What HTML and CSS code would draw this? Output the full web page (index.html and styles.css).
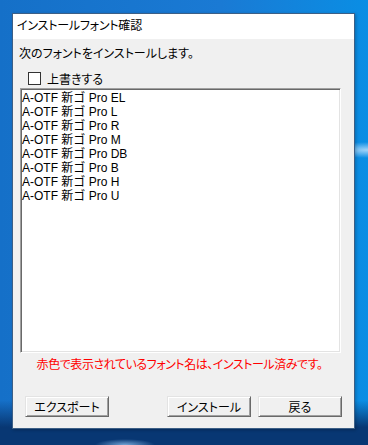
FILE: index.html
```html
<!DOCTYPE html>
<html lang="ja">
<head>
    <meta charset="UTF-8">
    <title>インストールフォント確認</title>
    <link rel="stylesheet" href="styles.css">
</head>
<body>
    <div class="dialog">
        <div class="titlebar">インストールフォント確認</div>
        <div class="content">
            <div class="prompt">次のフォントをインストールします。</div>
            <label class="overwrite"><span class="check"></span>上書きする</label>
            <div class="listbox">
                <div class="item">A-OTF 新ゴ Pro EL</div>
                <div class="item">A-OTF 新ゴ Pro L</div>
                <div class="item">A-OTF 新ゴ Pro R</div>
                <div class="item">A-OTF 新ゴ Pro M</div>
                <div class="item">A-OTF 新ゴ Pro DB</div>
                <div class="item">A-OTF 新ゴ Pro B</div>
                <div class="item">A-OTF 新ゴ Pro H</div>
                <div class="item">A-OTF 新ゴ Pro U</div>
            </div>
            <div class="note">赤色で表示されているフォント名は、インストール済みです。</div>
            <div class="buttons">
                <button class="btn">エクスポート</button>
                <button class="btn install">インストール</button>
                <button class="btn back">戻る</button>
            </div>
        </div>
    </div>
</body>
</html>
```
FILE: styles.css
```css
body {
    margin: 0;
    width: 368px;
    height: 445px;
    overflow: hidden;
    font-family: "Liberation Sans", "Noto Sans CJK JP", sans-serif;
    font-size: 12px;
    font-feature-settings: "palt";
    color: #000;
    background:
        radial-gradient(ellipse 40px 8px at 368px 150px, rgba(200, 230, 255, 0.8), rgba(200, 230, 255, 0) 100%),
        radial-gradient(ellipse 30px 6px at 125px 445px, rgba(160, 210, 255, 0.7), rgba(160, 210, 255, 0) 100%),
        linear-gradient(180deg, rgba(10, 60, 120, 0) 0%, rgba(10, 60, 120, 0) 90%, rgba(8, 55, 115, 1) 96%),
        linear-gradient(90deg, #1570c8 0%, #1a7ad4 60%, #0a8ee4 100%);
    padding: 13px 0 0 12px;
    box-sizing: border-box;
}
.dialog {
    width: 343px;
    height: 416px;
    box-sizing: border-box;
    border: 1px solid #3c5f86;
    background-color: #f0f0f0;
    display: flex;
    flex-direction: column;
    box-shadow: 1px 1px 3px rgba(0, 0, 0, 0.25);
}
.titlebar {
    height: 25px;
    line-height: 25px;
    background-color: #fff;
    padding-left: 4px;
    letter-spacing: -0.2px;
}
.content {
    flex: 1;
    display: flex;
    flex-direction: column;
    padding: 8px 12px 0 6px;
}
.prompt {
    line-height: 14px;
}
.overwrite {
    display: flex;
    align-items: center;
    height: 13px;
    margin: 11px 0 0 9px;
    gap: 6px;
}
.check {
    width: 11px;
    height: 11px;
    border: 1px solid #333;
    background-color: #fff;
}
.listbox {
    height: 265px;
    width: 321px;
    box-sizing: border-box;
    margin: 3px 0 0 1px;
    background-color: #fff;
    border: 1px solid;
    border-color: #a0a0a0 #fff #fff #a0a0a0;
    box-shadow: inset 1px 1px #696969, inset -1px -1px #e3e3e3;
    padding: 2px 0 0 1px;
}
.item {
    line-height: 14px;
    font-feature-settings: normal;
}
.note {
    color: #ff0000;
    text-align: center;
    width: 321px;
    line-height: 14px;
    margin-top: 5px;
    letter-spacing: -0.45px;
}
.buttons {
    display: flex;
    margin-top: 24px;
    padding-left: 6px;
}
.btn {
    width: 84px;
    height: 21px;
    padding: 0;
    font: inherit;
    color: #000;
    background-color: #f0f0f0;
    border: 1px solid;
    border-color: #e3e3e3 #696969 #696969 #e3e3e3;
    box-shadow: inset 1px 1px #fff, inset -1px -1px #a0a0a0;
}
.install {
    margin-left: auto;
}
.back {
    margin-left: 7px;
}
```
